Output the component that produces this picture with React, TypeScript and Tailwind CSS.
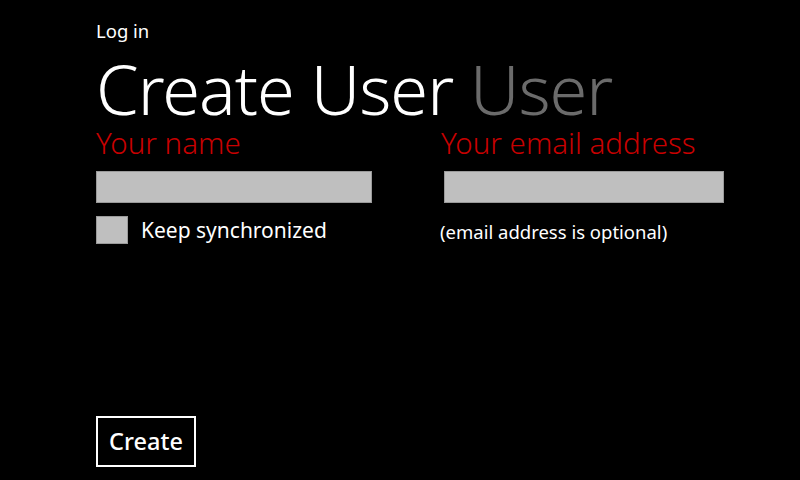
import React from "react";

export default function App() {
  return (
    <div
      className="w-[800px] h-[480px] bg-black text-white overflow-hidden flex flex-col pl-[96px]"
      style={{ fontFamily: '"Noto Sans", "Open Sans", sans-serif' }}
    >
      <div className="pt-[20px] text-[18.5px] leading-[22px]">Log in</div>
      <div className="mt-[12px] text-[68.5px] leading-[70px] font-light tracking-[-1px] whitespace-nowrap">
        Create User <span className="text-[#6b6b6b]">User</span>
      </div>
      <div className="mt-[2px] flex gap-[72px]">
        <div className="w-[276px] flex flex-col">
          <div className="text-[29.5px] leading-[34px] text-[#c80000] font-light">Your name</div>
          <div className="mt-[11px] h-[32px] bg-[#bfbfbf] border border-[#9a9a9a]" />
          <div className="mt-[13px] flex items-center gap-[13px]">
            <div className="w-[32px] h-[28px] bg-[#bfbfbf] border border-[#9a9a9a]" />
            <div className="text-[21px] leading-[26px]">Keep synchronized</div>
          </div>
        </div>
        <div className="w-[280px] flex flex-col">
          <div className="-ml-[3px] text-[29.5px] leading-[34px] text-[#c80000] font-light whitespace-nowrap">Your email address</div>
          <div className="mt-[11px] h-[32px] bg-[#bfbfbf] border border-[#9a9a9a]" />
          <div className="mt-[18px] -ml-[4px] text-[18.5px] leading-[22px] whitespace-nowrap">(email address is optional)</div>
        </div>
      </div>
      <div className="mt-auto mb-[13px]">
        <button className="w-[100px] h-[51px] border-2 border-white text-[23.5px] font-medium flex items-center justify-center">
          Create
        </button>
      </div>
    </div>
  );
}
